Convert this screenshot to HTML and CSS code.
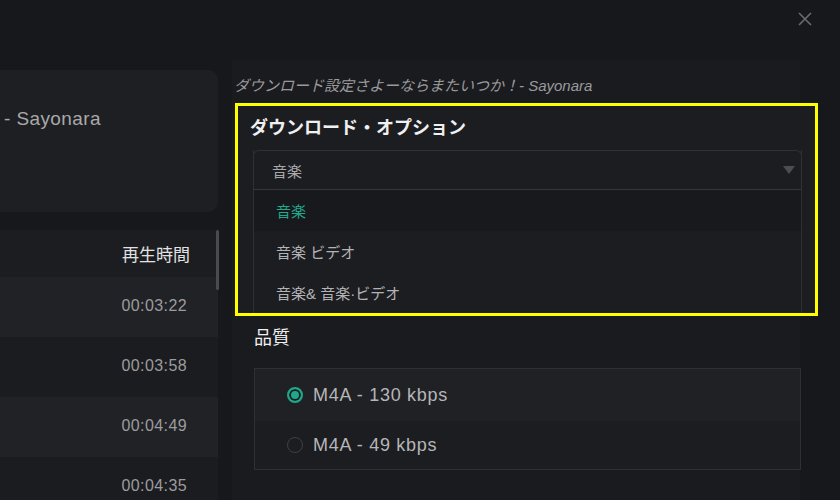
FILE: index.html
```html
<!DOCTYPE html>
<html>
<head>
    <title>ダウンロード設定</title>
    <link rel="stylesheet" href="styles.css">
</head>
<body>
    <div class="topbar">
        <button class="close-button" aria-label="close">
            <svg width="14" height="14" viewBox="0 0 14 14">
                <path d="M1 1L13 13M13 1L1 13" stroke="#6a6b6f" stroke-width="1.6" fill="none"/>
            </svg>
        </button>
    </div>

    <div class="main">
        <div class="left">
            <div class="track-card">
                <span class="track-title">- Sayonara</span>
            </div>

            <div class="track-table">
                <div class="table-head">再生時間</div>
                <div class="table-row light">00:03:22</div>
                <div class="table-row">00:03:58</div>
                <div class="table-row light">00:04:49</div>
                <div class="table-row">00:04:35</div>
                <div class="scrollbar"></div>
            </div>
        </div>

        <div class="settings">
            <div class="settings-title">ダウンロード設定さよーならまたいつか！- Sayonara</div>

            <div class="option-section">
                <h3>ダウンロード・オプション</h3>
                <div class="dropdown">
                    <div class="dropdown-head">
                        <span>音楽</span>
                        <span class="arrow"></span>
                    </div>
                    <div class="dropdown-list">
                        <div class="dropdown-item selected">音楽</div>
                        <div class="dropdown-item">音楽 ビデオ</div>
                        <div class="dropdown-item">音楽&amp; 音楽·ビデオ</div>
                    </div>
                </div>
            </div>

            <h3 class="quality-title">品質</h3>
            <div class="quality-list">
                <div class="quality-item active">
                    <span class="radio checked"></span>
                    <span>M4A - 130 kbps</span>
                </div>
                <div class="quality-item">
                    <span class="radio"></span>
                    <span>M4A - 49 kbps</span>
                </div>
            </div>
        </div>
    </div>
</body>
</html>
```

FILE: styles.css
```css
*{
    box-sizing: border-box;
}
body {
    width: 840px;
    height: 500px;
    margin: 0;
    overflow: hidden;
    font-family: "Liberation Sans", "Noto Sans CJK JP", sans-serif;
    background-color: #17181c;
    color: #e0e0e0;
}
.topbar {
    height: 60px;
    display: flex;
    justify-content: flex-end;
    align-items: flex-start;
    padding: 12px 28px 0 0;
}
.close-button {
    width: 14px;
    height: 14px;
    padding: 0;
    border: none;
    background: transparent;
    cursor: pointer;
    display: flex;
}
.main {
    display: flex;
    gap: 14px;
    height: 440px;
}
.left {
    width: 218px;
    padding-top: 10px;
}
.track-card {
    height: 142px;
    background-color: #1e1f23;
    border-radius: 0 10px 10px 0;
    padding: 38px 0 0 4px;
}
.track-title {
    font-size: 19px;
    letter-spacing: 0.4px;
    color: #a9a9ab;
}
.track-table {
    position: relative;
    margin-top: 18px;
    background-color: #1b1c20;
}
.table-head {
    height: 47px;
    display: flex;
    align-items: center;
    justify-content: flex-end;
    padding-right: 28px;
    font-size: 17px;
    color: #e2e2e2;
    background-color: #1c1d21;
}
.table-row {
    height: 60px;
    display: flex;
    align-items: center;
    justify-content: flex-end;
    padding: 0 31px 2px 0;
    font-size: 16px;
    letter-spacing: 0.4px;
    color: #9c9c9e;
    background-color: #1b1c20;
}
.table-row.light {
    background-color: #212226;
}
.scrollbar {
    position: absolute;
    top: 0;
    right: -1px;
    width: 3px;
    height: 60px;
    background-color: #4a4b4f;
    border-radius: 2px;
}
.settings {
    width: 568px;
    background-color: #1a1b1f;
    padding-top: 16px;
}
.settings-title {
    height: 20px;
    line-height: 20px;
    margin-left: 2px;
    font-size: 15px;
    font-style: italic;
    color: #9a9a9c;
}
.option-section {
    width: 583px;
    margin: 7px 0 0 3px;
    border: 3px solid #ffff00;
    padding: 10px 13px 0 15px;
    background-color: #1c1d21;
}
h3 {
    margin: 0;
    height: 24px;
    line-height: 24px;
    font-size: 18px;
    color: #f0f0f0;
}
.option-section h3 {
    margin-left: -3px;
    font-weight: bold;
}
.dropdown {
    margin-top: 10px;
    border-left: 1px solid #2d2f33;
    border-right: 1px solid #2d2f33;
}
.dropdown-head {
    height: 40px;
    display: flex;
    align-items: center;
    justify-content: space-between;
    padding: 0 6px 0 18px;
    margin: 0 -1px;
    border: 1px solid #2f3136;
    border-bottom-color: #35373c;
    border-radius: 6px 6px 0 0;
    font-size: 15px;
    color: #a8a8aa;
    background-color: #1c1d21;
}
.arrow {
    width: 0;
    height: 0;
    border-left: 6px solid transparent;
    border-right: 6px solid transparent;
    border-top: 8px solid #4b4d51;
}
.dropdown-item {
    height: 41px;
    display: flex;
    align-items: center;
    padding-left: 22px;
    font-size: 15px;
    color: #b3b3b5;
    background-color: #1c1d21;
}
.dropdown-item.selected {
    color: #1fa88a;
    background-color: #18191d;
}
.quality-title {
    margin: 10px 0 0 22px;
    font-weight: normal;
}
.quality-list {
    width: 547px;
    margin: 18px 0 0 22px;
    border: 1px solid #2e3034;
}
.quality-item {
    height: 52px;
    display: flex;
    align-items: center;
    gap: 10px;
    padding-left: 32px;
    font-size: 18px;
    letter-spacing: 0.7px;
    color: #b6b6b8;
    background-color: #1c1d21;
}
.quality-item.active {
    background-color: #202125;
}
.quality-item + .quality-item {
    height: 48px;
}
.radio {
    width: 16px;
    height: 16px;
    border-radius: 50%;
    border: 1px solid #3e4044;
    flex-shrink: 0;
}
.radio.checked {
    border: 2px solid #1fa88a;
    background-color: #1fa88a;
    box-shadow: inset 0 0 0 2px #1c1d21;
}
```
